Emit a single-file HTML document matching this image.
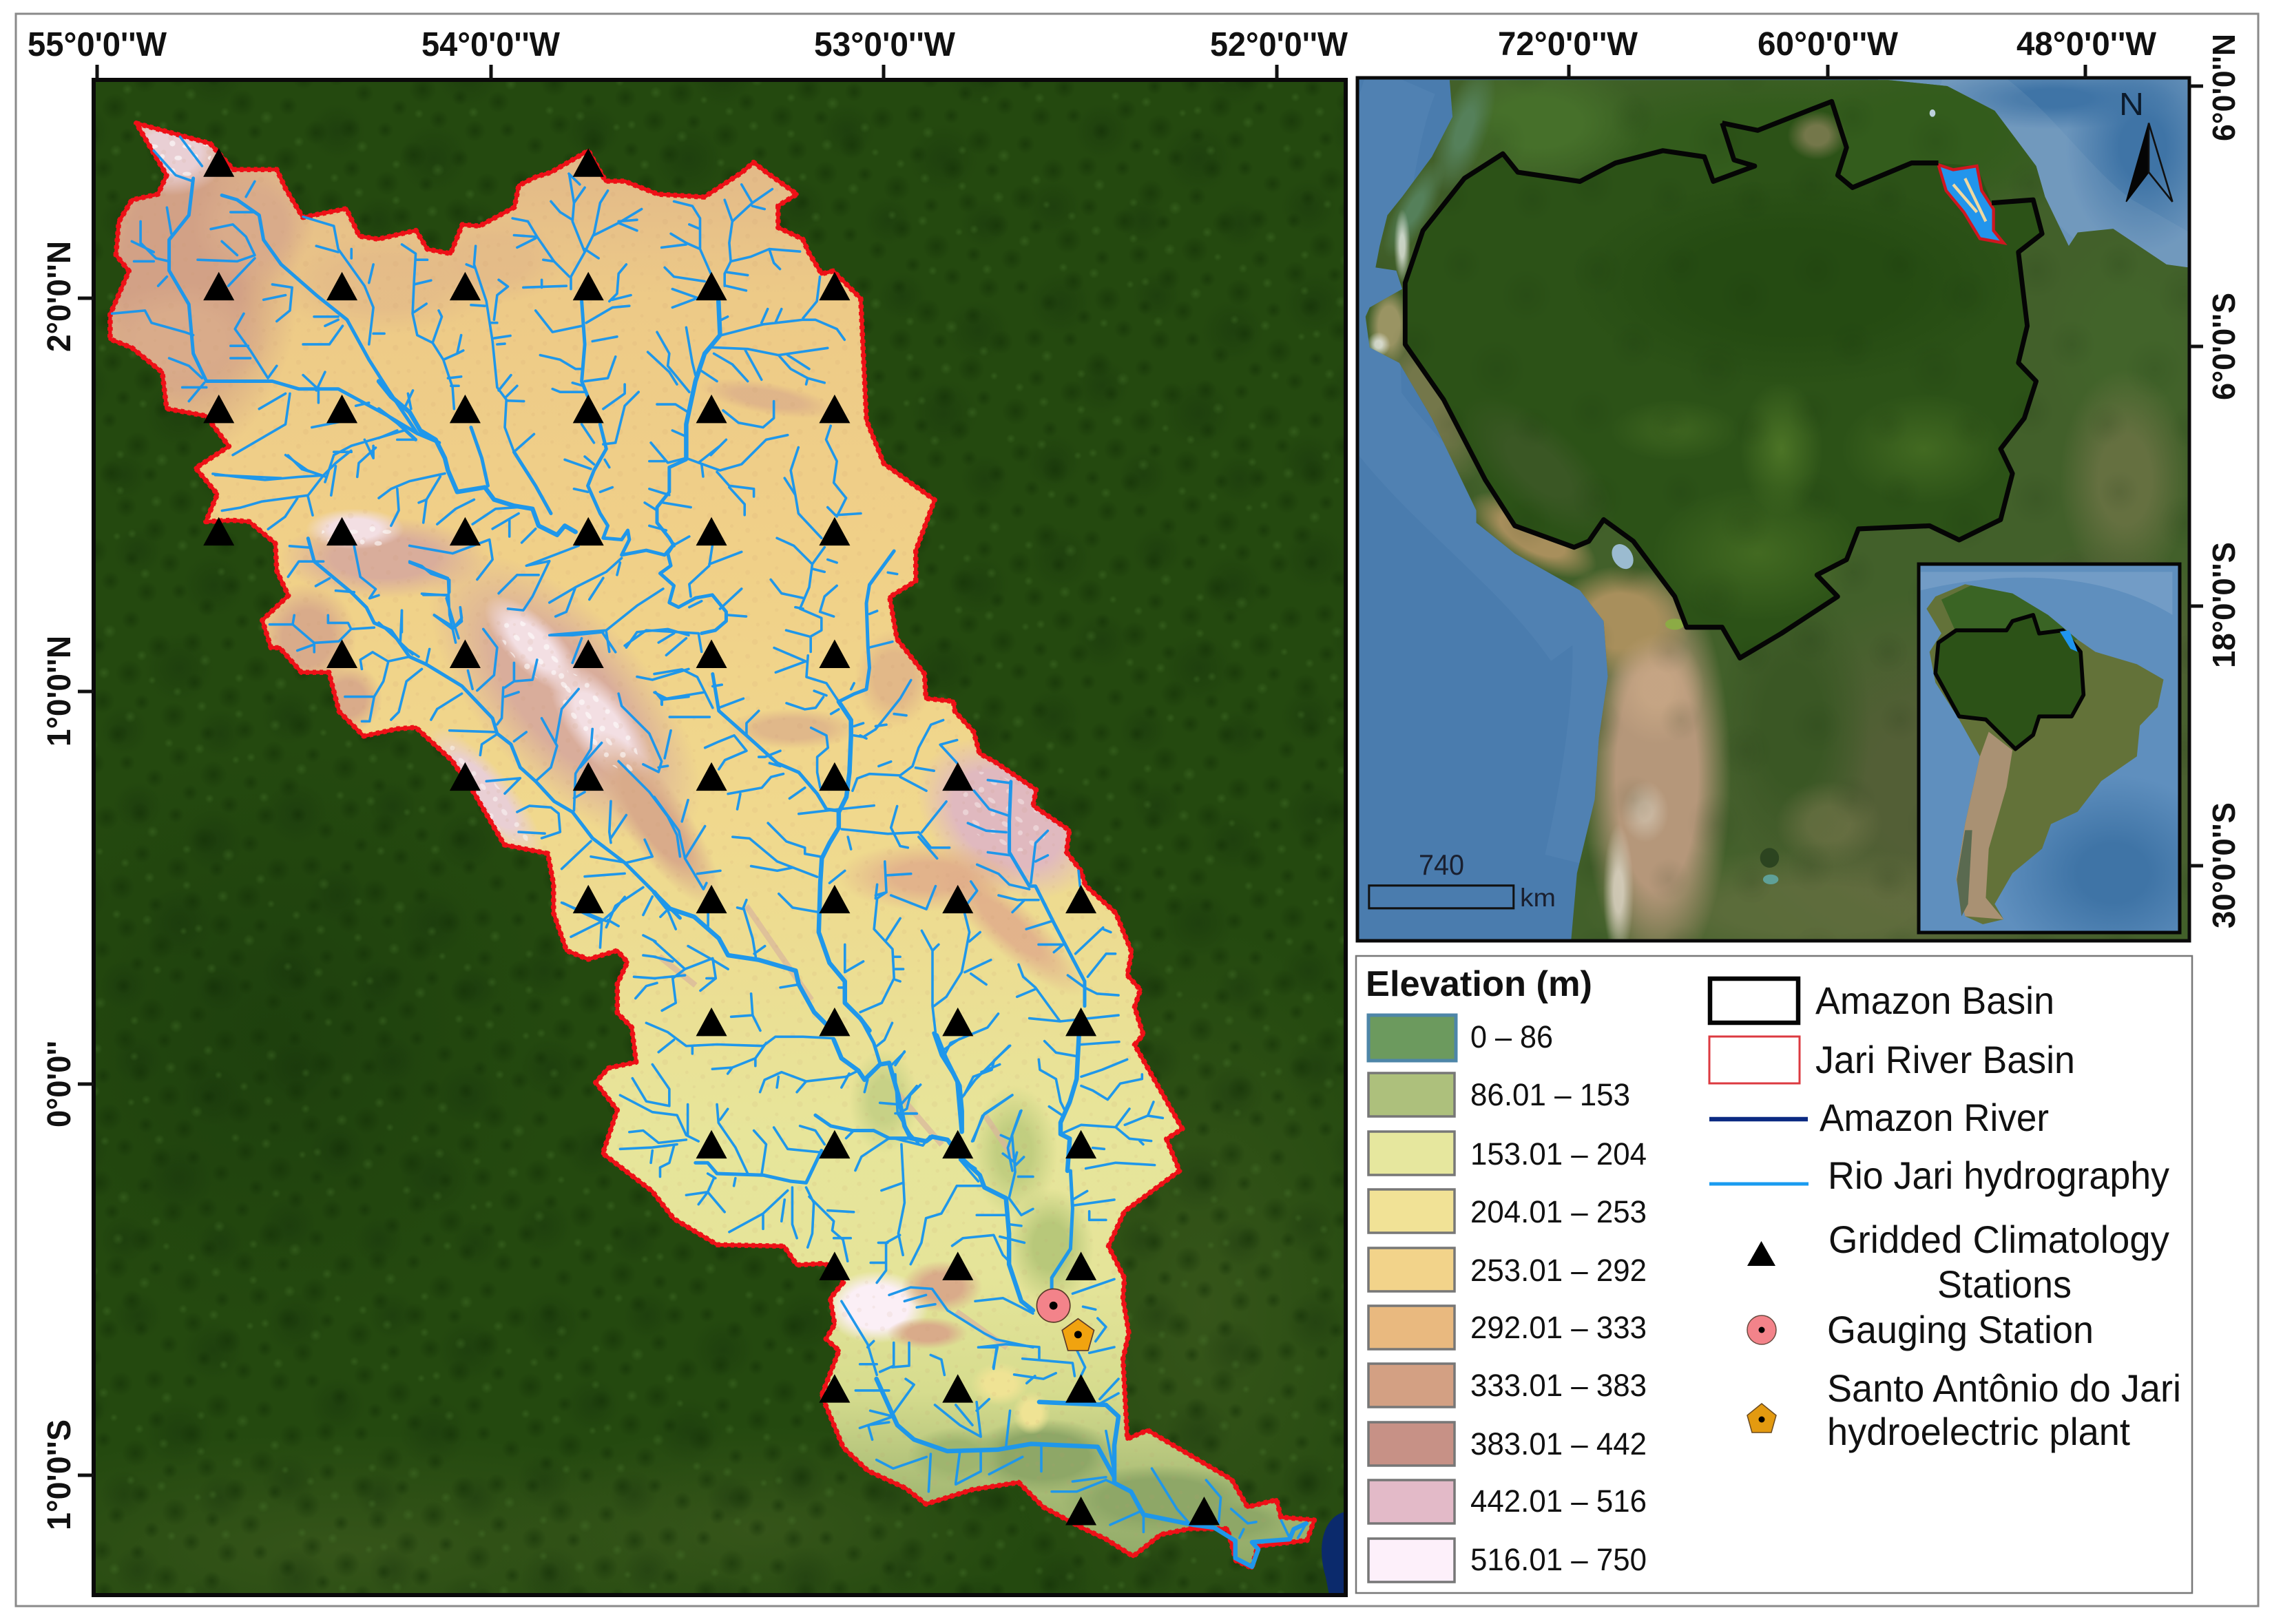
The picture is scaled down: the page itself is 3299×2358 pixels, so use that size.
<!DOCTYPE html>
<html><head><meta charset="utf-8"><title>Jari River Basin map</title>
<style>
html,body{margin:0;padding:0;background:#fff}
svg{display:block}
text{font-family:"Liberation Sans",Arial,sans-serif;fill:#111}
.b{font-weight:bold}
.r path{fill:none;stroke:#1f97ea;stroke-linejoin:round;stroke-linecap:round;vector-effect:non-scaling-stroke;stroke-width:3.6}
.r path.m{stroke-width:5}
.r path.k{stroke-width:6.5}
</style></head><body>
<svg xmlns="http://www.w3.org/2000/svg" width="3299" height="2358" viewBox="0 0 3299 2358">
<defs>
<clipPath id="mapc"><rect x="136" y="116" width="1818" height="2200"/></clipPath>
<clipPath id="panc"><rect x="1971" y="113" width="1208" height="1253"/></clipPath>
<clipPath id="insc"><rect x="2786" y="819" width="379" height="535"/></clipPath>
<clipPath id="land"><path d="M180 130 185 190 150 255 100 320 75 350 62 400 55 435 90 440 100 470 45 500 38 515 45 565 95 590 150 680 190 760 225 830 225 850 290 900 400 960 440 1010 447 1100 432 1200 425 1300 395 1420 385 1530 1428 1530 1428 435 1390 430 1300 372 1240 378 1225 400 1185 320 1170 270 1100 180 1020 140 920 130Z"/></clipPath>
<path id="basin" d="M94 85 145 99 161 117 191 117 197 130 209 150 239 144 248 163 261 165 287 159 295 172 311 175 319 155 331 156 355 143 358 128 370 122 380 119 406 104 418 125 431 125 454 134 486 136 512 119 520 112 529 119 550 134 537 142 537 157 554 165 558 174 567 189 575 187 594 206 598 290 610 320 645 345 632 380 632 401 614 412 619 441 638 465 639 482 658 484 659 491 672 505 676 520 687 526 715 545 713 556 738 573 736 588 746 601 749 611 770 630 781 657 778 673 787 683 783 695 789 714 783 721 816 779 805 786 814 808 776 836 765 860 776 882 775 896 779 920 775 938 778 993 792 987 850 1021 861 1040 881 1035 884 1047 907 1049 902 1063 868 1067 864 1082 853 1077 847 1055 821 1055 801 1059 782 1074 763 1062 746 1054 720 1040 703 1023 671 1028 639 1038 625 1027 599 1015 582 999 567 963 579 932 570 924 576 914 573 896 582 885 576 874 567 872 550 873 541 860 495 859 475 847 465 841 450 822 416 796 426 766 411 747 420 737 439 733 436 709 426 699 426 679 433 664 426 656 406 662 391 656 382 630 382 610 378 589 348 583 327 547 312 525 287 502 274 503 251 508 234 491 227 464 208 464 193 447 187 447 181 428 199 411 191 394 190 375 172 360 160 359 142 360 150 341 135 323 158 308 142 287 115 282 112 257 91 240 76 234 76 217 89 187 80 176 82 153 91 138 109 134 115 121Z"/>
<clipPath id="bc"><use href="#basin"/></clipPath>
<linearGradient id="elev" gradientUnits="userSpaceOnUse" x1="0" y1="85" x2="0" y2="1080">
<stop offset="0" stop-color="#dfb489"/><stop offset=".12" stop-color="#edca87"/><stop offset=".3" stop-color="#f0d088"/><stop offset=".48" stop-color="#f0d88d"/><stop offset=".58" stop-color="#ecdd92"/><stop offset=".7" stop-color="#e7e59a"/><stop offset=".8" stop-color="#e5e499"/><stop offset=".88" stop-color="#d6dc8e"/><stop offset=".95" stop-color="#a6ba74"/><stop offset="1" stop-color="#8fa968"/>
</linearGradient>
<radialGradient id="dk"><stop offset="0" stop-color="#122e06" stop-opacity=".5"/><stop offset="1" stop-color="#122e06" stop-opacity="0"/></radialGradient>
<radialGradient id="lt"><stop offset="0" stop-color="#4f8032" stop-opacity=".33"/><stop offset="1" stop-color="#4f8032" stop-opacity="0"/></radialGradient>
<radialGradient id="dk2"><stop offset="0" stop-color="#10280a" stop-opacity=".4"/><stop offset="1" stop-color="#10280a" stop-opacity="0"/></radialGradient>
<pattern id="mA" patternUnits="userSpaceOnUse" width="260" height="260" patternTransform="rotate(17)">
<g fill="url(#dk)"><circle cx="20" cy="30" r="16"/><circle cx="70" cy="17" r="12"/><circle cx="120" cy="40" r="20"/><circle cx="185" cy="25" r="14"/><circle cx="235" cy="50" r="18"/><circle cx="40" cy="85" r="14"/><circle cx="95" cy="90" r="18"/><circle cx="150" cy="75" r="12"/><circle cx="205" cy="100" r="20"/><circle cx="25" cy="140" r="20"/><circle cx="80" cy="150" r="12"/><circle cx="130" cy="130" r="16"/><circle cx="180" cy="150" r="18"/><circle cx="235" cy="135" r="12"/><circle cx="50" cy="195" r="16"/><circle cx="105" cy="205" r="20"/><circle cx="160" cy="200" r="12"/><circle cx="215" cy="190" r="16"/><circle cx="25" cy="235" r="14"/><circle cx="80" cy="240" r="12"/><circle cx="140" cy="240" r="14"/><circle cx="195" cy="240" r="16"/><circle cx="240" cy="225" r="12"/></g>
<g fill="url(#lt)"><circle cx="45" cy="50" r="9"/><circle cx="100" cy="60" r="7"/><circle cx="160" cy="50" r="10"/><circle cx="215" cy="70" r="8"/><circle cx="60" cy="115" r="8"/><circle cx="115" cy="110" r="7"/><circle cx="170" cy="110" r="9"/><circle cx="20" cy="105" r="7"/><circle cx="225" cy="160" r="9"/><circle cx="150" cy="165" r="7"/><circle cx="75" cy="175" r="8"/><circle cx="30" cy="180" r="7"/><circle cx="130" cy="175" r="6"/><circle cx="185" cy="215" r="8"/><circle cx="110" cy="240" r="7"/><circle cx="240" cy="100" r="6"/></g>
</pattern>
<pattern id="mB" patternUnits="userSpaceOnUse" width="370" height="370">
<g fill="url(#dk2)"><circle cx="60" cy="70" r="45"/><circle cx="200" cy="60" r="35"/><circle cx="310" cy="110" r="45"/><circle cx="120" cy="190" r="40"/><circle cx="260" cy="230" r="50"/><circle cx="50" cy="300" r="40"/><circle cx="180" cy="320" r="35"/><circle cx="320" cy="325" r="35"/></g>
</pattern>
<pattern id="sp" patternUnits="userSpaceOnUse" width="31" height="29">
<g fill="#c8966e" fill-opacity=".1"><circle cx="4" cy="5" r="1.6"/><circle cx="14" cy="3" r="1"/><circle cx="25" cy="8" r="2"/><circle cx="9" cy="15" r="1.2"/><circle cx="20" cy="18" r="1.7"/><circle cx="3" cy="24" r="1.4"/><circle cx="14" cy="25" r="1"/><circle cx="27" cy="25" r="1.3"/></g>
</pattern>
<pattern id="wp" patternUnits="userSpaceOnUse" width="23" height="19">
<g fill="#fff"><circle cx="4" cy="4" r="2"/><ellipse cx="14" cy="6" rx="3" ry="1.4"/><circle cx="20" cy="13" r="1.7"/><ellipse cx="8" cy="14" rx="2.6" ry="1.6"/></g>
</pattern>
<radialGradient id="g1"><stop offset=".5" stop-color="#d2a186"/><stop offset="1" stop-color="#d2a186" stop-opacity="0"/></radialGradient>
<radialGradient id="g2"><stop offset=".5" stop-color="#e9cfd4"/><stop offset="1" stop-color="#e9cfd4" stop-opacity="0"/></radialGradient>
<radialGradient id="g3"><stop offset=".5" stop-color="#d9ab8a"/><stop offset="1" stop-color="#d9ab8a" stop-opacity="0"/></radialGradient>
<radialGradient id="g4"><stop offset=".5" stop-color="#e2b888"/><stop offset="1" stop-color="#e2b888" stop-opacity="0"/></radialGradient>
<radialGradient id="g5"><stop offset=".5" stop-color="#d9ad9b"/><stop offset="1" stop-color="#d9ad9b" stop-opacity="0"/></radialGradient>
<radialGradient id="g6"><stop offset=".5" stop-color="#f3dfe3"/><stop offset="1" stop-color="#f3dfe3" stop-opacity="0"/></radialGradient>
<radialGradient id="g7"><stop offset=".6" stop-color="#e0b9bf"/><stop offset="1" stop-color="#e0b9bf" stop-opacity="0"/></radialGradient>
<radialGradient id="g8"><stop offset=".4" stop-color="#dfa98a"/><stop offset="1" stop-color="#dfa98a" stop-opacity="0"/></radialGradient>
<radialGradient id="g9"><stop offset=".6" stop-color="#fbeff6"/><stop offset="1" stop-color="#fbeff6" stop-opacity="0"/></radialGradient>
<radialGradient id="g10"><stop offset=".4" stop-color="#c7d186"/><stop offset="1" stop-color="#c7d186" stop-opacity="0"/></radialGradient>
<radialGradient id="g11"><stop offset=".4" stop-color="#b8c87a"/><stop offset="1" stop-color="#b8c87a" stop-opacity="0"/></radialGradient>
<radialGradient id="g12"><stop offset=".6" stop-color="#8ea767"/><stop offset="1" stop-color="#8ea767" stop-opacity="0"/></radialGradient>
<radialGradient id="g13"><stop offset=".5" stop-color="#9fb56f"/><stop offset="1" stop-color="#9fb56f" stop-opacity="0"/></radialGradient>
<radialGradient id="g14"><stop offset=".5" stop-color="#efe394"/><stop offset="1" stop-color="#efe394" stop-opacity="0"/></radialGradient>
<radialGradient id="ol"><stop offset="0" stop-color="#3d5a1e" stop-opacity=".7"/><stop offset="1" stop-color="#3d5a1e" stop-opacity="0"/></radialGradient>
<radialGradient id="dg"><stop offset="0" stop-color="#1a3a0c" stop-opacity=".6"/><stop offset="1" stop-color="#1a3a0c" stop-opacity="0"/></radialGradient>
<radialGradient id="p1"><stop offset=".4" stop-color="#335c1c"/><stop offset="1" stop-color="#335c1c" stop-opacity="0"/></radialGradient>
<radialGradient id="p2"><stop offset=".4" stop-color="#46702a"/><stop offset="1" stop-color="#46702a" stop-opacity="0"/></radialGradient>
<radialGradient id="p3"><stop offset=".4" stop-color="#42642a"/><stop offset="1" stop-color="#42642a" stop-opacity="0"/></radialGradient>
<radialGradient id="p4"><stop offset=".4" stop-color="#74774a"/><stop offset="1" stop-color="#74774a" stop-opacity="0"/></radialGradient>
<radialGradient id="p5"><stop offset=".4" stop-color="#535f36"/><stop offset="1" stop-color="#535f36" stop-opacity="0"/></radialGradient>
<radialGradient id="p6"><stop offset=".4" stop-color="#3a5724"/><stop offset="1" stop-color="#3a5724" stop-opacity="0"/></radialGradient>
<radialGradient id="p7"><stop offset=".55" stop-color="#b5977a"/><stop offset="1" stop-color="#b5977a" stop-opacity="0"/></radialGradient>
<radialGradient id="p8"><stop offset=".5" stop-color="#a88f5c"/><stop offset="1" stop-color="#a88f5c" stop-opacity="0"/></radialGradient>
<radialGradient id="p9"><stop offset=".5" stop-color="#9a9463"/><stop offset="1" stop-color="#9a9463" stop-opacity="0"/></radialGradient>
<radialGradient id="p10"><stop offset=".3" stop-color="#e8ece6"/><stop offset="1" stop-color="#e8ece6" stop-opacity="0"/></radialGradient>
<radialGradient id="p11"><stop offset=".5" stop-color="#254b12"/><stop offset="1" stop-color="#254b12" stop-opacity="0"/></radialGradient>
<radialGradient id="p12"><stop offset="0" stop-color="#4c7426"/><stop offset="1" stop-color="#4c7426" stop-opacity="0"/></radialGradient>
<radialGradient id="p13"><stop offset=".3" stop-color="#3f74a6"/><stop offset="1" stop-color="#3f74a6" stop-opacity="0"/></radialGradient>
<radialGradient id="p14"><stop offset=".3" stop-color="#55805a"/><stop offset="1" stop-color="#55805a" stop-opacity="0"/></radialGradient>
<radialGradient id="p15"><stop offset=".3" stop-color="#c9a886"/><stop offset="1" stop-color="#c9a886" stop-opacity="0"/></radialGradient>
<radialGradient id="p16"><stop offset=".3" stop-color="#dcd4c4"/><stop offset="1" stop-color="#dcd4c4" stop-opacity="0"/></radialGradient>
<path id="t" d="M0-19.7l10.7 19.7h-21.4z" fill="#000"/>
</defs>

<rect width="3299" height="2358" fill="#fff"/>
<rect x="23" y="20" width="3256" height="2312" fill="none" stroke="#8a8a8a" stroke-width="3"/>

<!-- MAIN MAP -->
<g clip-path="url(#mapc)">
<rect x="136" y="116" width="1818" height="2200" fill="#24490f"/>
<ellipse cx="1750" cy="1900" rx="320" ry="560" fill="url(#ol)"/>
<ellipse cx="500" cy="2250" rx="650" ry="170" fill="url(#ol)"/>
<ellipse cx="1100" cy="2220" rx="400" ry="150" fill="url(#ol)"/>
<ellipse cx="400" cy="1500" rx="420" ry="420" fill="url(#dg)"/>
<rect x="136" y="116" width="1818" height="2200" fill="url(#mB)" opacity=".7"/>
<rect x="136" y="116" width="1818" height="2200" fill="url(#mA)"/>
<path d="M1925 2290 C1910 2240 1925 2200 1954 2195 L1954 2316 L1930 2316Z" fill="#0b2a6c"/>
<g transform="scale(2.104)">
<use href="#basin" fill="url(#elev)"/>
<g clip-path="url(#bc)">
<ellipse cx="125" cy="190" rx="82" ry="130" fill="url(#g1)"/>
<ellipse cx="118" cy="105" rx="40" ry="30" fill="url(#g2)"/>
<ellipse cx="175" cy="155" rx="42" ry="42" fill="url(#g3)"/>
<ellipse cx="125" cy="235" rx="60" ry="40" fill="url(#g3)"/>
<ellipse cx="265" cy="195" rx="80" ry="36" fill="url(#g4)" opacity=".7"/>
<ellipse cx="340" cy="180" rx="50" ry="30" fill="url(#g4)" opacity=".7"/>
<ellipse cx="530" cy="275" rx="48" ry="11" fill="url(#g3)" transform="rotate(10 530 275)" opacity=".7"/>
<ellipse cx="265" cy="385" rx="72" ry="28" fill="url(#g5)"/>
<ellipse cx="245" cy="365" rx="34" ry="14" fill="url(#g6)"/>
<ellipse cx="212" cy="440" rx="34" ry="38" fill="url(#g3)"/>
<ellipse cx="240" cy="482" rx="24" ry="24" fill="url(#g3)"/>
<ellipse cx="390" cy="482" rx="125" ry="58" fill="url(#g5)" transform="rotate(48 390 482)"/>
<ellipse cx="368" cy="445" rx="44" ry="18" fill="url(#g6)" transform="rotate(45 368 445)"/>
<ellipse cx="415" cy="500" rx="52" ry="22" fill="url(#g6)" transform="rotate(52 415 500)"/>
<ellipse cx="335" cy="548" rx="58" ry="18" fill="url(#g2)" transform="rotate(50 335 548)"/>
<ellipse cx="452" cy="565" rx="72" ry="22" fill="url(#g3)" transform="rotate(55 452 565)"/>
<ellipse cx="617" cy="468" rx="27" ry="34" fill="url(#g4)"/>
<ellipse cx="547" cy="503" rx="46" ry="14" fill="url(#g3)" opacity=".7"/>
<ellipse cx="695" cy="565" rx="68" ry="48" fill="url(#g7)" transform="rotate(35 695 565)"/>
<ellipse cx="642" cy="605" rx="64" ry="24" fill="url(#g8)" opacity=".8"/>
<ellipse cx="697" cy="640" rx="68" ry="18" fill="url(#g8)" transform="rotate(42 697 640)" opacity=".8"/>
<ellipse cx="605" cy="902" rx="36" ry="25" fill="url(#g9)"/>
<ellipse cx="650" cy="888" rx="28" ry="18" fill="url(#g3)"/>
<ellipse cx="640" cy="920" rx="28" ry="11" fill="url(#g3)"/>
<ellipse cx="610" cy="760" rx="24" ry="36" fill="url(#g10)"/>
<ellipse cx="700" cy="795" rx="30" ry="46" fill="url(#g11)" opacity=".8"/>
<ellipse cx="725" cy="860" rx="30" ry="40" fill="url(#g11)"/>
<ellipse cx="720" cy="1005" rx="52" ry="26" fill="url(#g12)"/>
<ellipse cx="660" cy="1005" rx="34" ry="20" fill="url(#g13)"/>
<ellipse cx="800" cy="1035" rx="68" ry="24" fill="url(#g12)"/>
<ellipse cx="850" cy="1050" rx="38" ry="14" fill="url(#g12)"/>
<ellipse cx="712" cy="975" rx="13" ry="15" fill="url(#g14)"/>
<ellipse cx="690" cy="955" rx="20" ry="15" fill="url(#g14)"/>
<path d="M515 625 L560 690M620 755 L650 790M680 770 L700 800M455 660 L480 680M660 905 L695 930" stroke="#d9b59d" stroke-width="4" fill="none" opacity=".7"/>
<use href="#basin" fill="url(#sp)"/>
<ellipse cx="368" cy="450" rx="34" ry="12" fill="url(#wp)" opacity=".55" transform="rotate(45 368 450)"/>
<ellipse cx="412" cy="498" rx="42" ry="15" fill="url(#wp)" opacity=".55" transform="rotate(52 412 498)"/>
<ellipse cx="335" cy="548" rx="44" ry="10" fill="url(#wp)" opacity=".45" transform="rotate(50 335 548)"/>
<ellipse cx="248" cy="368" rx="26" ry="10" fill="url(#wp)" opacity=".55"/>
<ellipse cx="690" cy="560" rx="36" ry="22" fill="url(#wp)" opacity=".35" transform="rotate(35 690 560)"/>
<ellipse cx="120" cy="105" rx="26" ry="18" fill="url(#wp)" opacity=".6"/>
</g>
<use href="#basin" fill="none" stroke="#ee1017" stroke-width="3.6" stroke-dasharray="2.4 2.4" stroke-linejoin="round"/>
<use href="#basin" fill="none" stroke="#ee1017" stroke-width="2.5" stroke-linejoin="round"/>
</g>

<g class="r">
<!-- Z1 NW -->
<g transform="scale(.6378 .4464)">
<path class="m" d="M440 580 L430 700 385 780 385 880 430 990 440 1150 470 1240 620 1240 680 1265 770 1265 880 1350 950 1410 1000 1440"/>
<path d="M350 490 L400 570 440 590M410 445 L460 540M380 675 L390 760M320 720 L320 790 355 840 385 850M300 785 L350 820M305 850 L350 850M380 900 L360 930M255 1020 L330 1010 345 1050 420 1080 440 1090M385 1165 L430 1190 460 1230M415 1260 L470 1260M430 1305 L465 1245M555 1020 L535 1070 570 1140 610 1230 630 1190M525 1125 L565 1125M525 1165 L570 1165"/>
<path class="m" d="M505 635 L540 650 590 700 600 780 640 860 720 960 790 1040 840 1170 880 1260 950 1410"/>
<path d="M525 690 L580 690M580 590 L560 640M480 745 L530 730 560 770 580 830 540 850 450 845M505 785 L540 830M580 840 L520 930M690 705 L760 735 770 810 830 930 850 1000 840 1120M720 800 L770 820M800 810 L800 840M850 860 L840 920M850 1085 L875 1085M620 925 L665 935 660 1010 630 1045M600 975 L650 960M715 1030 L770 1030M740 1060 L770 1040M690 1120 L750 1120 780 1060M1295 565 L1320 600M590 1330 L650 1280M660 1280 L650 1380 530 1480M710 1390 L780 1370M720 1270 L740 1210M690 1220 L720 1260M725 1260 L725 1310M810 1320 L840 1310M920 1330 L940 1270M920 1400 L800 1450 760 1480 740 1568M830 1430 L850 1490M760 1470 L800 1470M650 1480 L700 1530 740 1550M850 1450 L850 1490M490 1545 L640 1555"/>
</g>
<!-- Z5 -->
<g transform="translate(550 250) scale(.4464)">
<path d="M75 235 L120 265 115 350 110 460 125 530 175 555 210 610 240 700 245 770M120 285 L158 285M115 365 L170 352M115 455 L155 428M175 555 L205 470 195 450M210 610 L255 590 275 580 255 590 268 530M225 670 L268 665M235 695 L260 695M315 240 L310 300 350 420 370 550 385 700 415 740 410 830 440 910M285 300 L310 310M300 432 L345 435M390 350 L420 372 385 400 375 480M365 490 L385 490M375 540 L428 532M385 560 L410 558M390 710 L430 660M415 730 L450 695M415 743 L472 745M445 905 L505 852"/>
<path class="m" d="M440 910 L510 1020 560 1110"/>
<path class="k" d="M0 680 L40 730 100 780 135 840 185 870 215 930 225 970 255 1040 345 1025 375 1065 440 1085 500 1095 520 1150 580 1180 605 1150 640 1170"/>
<path class="m" d="M0 770 L60 815 120 870M300 830 L335 930 355 1020"/>
<path d="M0 865 L60 840M60 870 L120 870M95 720 L105 770M215 980 L100 1005 40 1030 0 1060M60 1030 L65 1100 40 1150M200 990 L155 1065 130 1075M155 1065 L145 1140M190 1145 L250 1095 310 1065M305 1145 L380 1095 450 1090M370 1160 L455 1110M425 1130 L425 1185M465 1205 L510 1160M620 10 L635 100 630 160 670 260M635 100 L670 50M560 95 L590 130 630 155M745 60 L720 100 700 200 670 260 625 340 625 380M700 205 L780 165 855 120M780 165 L840 190M780 160 L840 155M670 250 L715 280M435 150 L485 160 515 210 570 290 620 340M440 205 L510 210M450 245 L510 215M535 285 L570 290M470 375 L610 370M530 350 L530 375M805 300 L780 330 775 395 750 420"/>
<path class="m" d="M660 420 L670 560 660 680 680 730"/>
<path d="M675 490 L760 440 815 435M760 415 L820 400M510 450 L565 520 660 500M695 550 L775 535M525 595 L590 610 640 640 660 640M670 680 L745 670 770 600M630 685 L665 695M565 705 L590 715 670 715M730 770 L800 720 800 690M845 715 L800 760 770 880"/>
<path class="m" d="M720 820 L740 900 700 970 680 1020 720 1110 745 1150 730 1190"/>
<path d="M660 820 L700 880M770 880 L730 885M605 935 L690 965M670 925 L700 950M735 935 L750 960M635 1030 L680 1040M720 1040 L760 1025"/>
<path class="m" d="M730 1190 L790 1195 810 1165 815 1195 790 1245 870 1230 930 1245 960 1210 940 1240 950 1280 915 1305 960 1345 945 1400 975 1415 1030 1385 1085 1375 1130 1430 1130 1460 1095 1490 1050 1500"/>
<path d="M960 95 L1020 110 1045 150 1045 250 1080 330M1010 170 L1045 185M950 200 L1000 230 1045 250M920 245 L1000 235M930 310 L960 340 1060 355M955 380 L1040 410M955 440 L1035 410M1180 40 L1215 100 1150 160 1125 90M1280 55 L1215 100M1215 110 L1255 120M1150 160 L1140 230 1145 290 1125 330 1125 370M1145 290 L1210 275 1270 250 1370 258M1270 250 L1285 295 1305 315M1130 325 L1200 335M1130 370 L1195 385"/>
<path class="k" d="M1105 420 L1110 530 1060 590 1030 680 1015 750 1000 820 1000 930"/>
<path d="M1115 530 L1250 495 1380 480 1420 480 1490 510 1515 545M1380 475 L1425 420 1435 340M1245 490 L1265 445M1290 490 L1310 445M1085 570 L1200 575 1300 595 1460 572M1300 595 L1340 640 1395 670 1450 685M1395 670 L1390 690M1330 595 L1400 640M1190 575 L1245 675M1090 590 L1150 625 1200 680M1115 480 L1135 470M905 520 L945 590 940 630 1010 715M875 585 L945 650 970 690M1000 505 L1020 620 1030 660M1040 640 L1100 680M905 755 L965 755 1005 780M955 840 L1000 860M1120 775 L1170 815 1250 830 1285 800 1285 745M885 880 L940 945 1000 930M880 940 L930 940M1000 930 L1040 945 1110 970 1180 950 1260 870 1330 855M1040 945 L1110 890 1130 870M1080 920 L1110 890M1050 950 L1055 990M1100 975 L1140 1020 1220 1030 1220 1055M1140 1025 L1190 1080 1190 1115"/>
<path class="m" d="M1000 935 L945 960 945 1040 905 1090 905 1140 945 1190 960 1215"/>
<path d="M880 1030 L945 1050M865 1075 L905 1100M925 1075 L1015 1090M880 1150 L935 1165M965 1210 L1010 1185M1085 1215 L1075 1280 1010 1340 1015 1380M1075 1275 L1180 1235M1180 1355 L1110 1420M1130 1440 L1195 1445M1010 1415 L1050 1395M925 1355 L840 1410 740 1490 560 1505M740 1495 L750 1560M800 1540 L870 1490 1040 1500 1050 1560M910 1530 L960 1500M1365 895 L1340 970 1355 1050 1365 1110 1440 1190M1320 995 L1355 1050M1470 825 L1455 870 1490 940 1480 1010 1520 1060 1490 1120 1460 1090M1490 1115 L1568 1110M1295 1190 L1350 1215 1410 1275 1400 1350 1370 1420 1440 1450 1440 1490 1405 1510 1405 1560M1450 1220 L1410 1275M1410 1290 L1450 1300M1460 1260 L1490 1270M1275 1325 L1310 1370 1380 1385M1490 1345 L1450 1380 1435 1430 1480 1445M1355 1415 L1380 1420M1325 1490 L1400 1510M650 1215 L480 1280 555 1265 500 1380 470 1425 420 1420M390 1370 L450 1310 520 1310M790 1255 L740 1300 640 1350 555 1400M730 1320 L685 1390M640 1350 L610 1430 575 1445M775 1310 L785 1270M100 1215 L240 1240M240 1240 L360 1195 370 1260 320 1325M100 1270 L225 1320 230 1440 250 1530M145 1375 L225 1375M180 1440 L245 1480 270 1450 265 1415M0 1465 L70 1530 110 1568M75 1425 L70 1530"/>
</g>
<!-- Z6 -->
<g transform="translate(300 650) scale(.4464)">
<path d="M20 85 L100 95 190 105 300 95 380 90 420 50 470 10M265 25 L310 70 375 90M420 60 L405 155M380 90 L330 155 180 175 110 195 50 205M295 165 L255 225 200 265M330 160 L345 220M550 0 L495 50 490 95"/>
<path class="m" d="M330 295 L350 370 470 470 520 520 545 570 600 595 660 680 715 705 830 775 930 880 945 930 990 965 1020 1040 1070 1085 1130 1150 1190 1185 1255 1270 1360 1350 1450 1440 1540 1530"/>
<path d="M270 320 L335 325M265 420 L300 370 380 370M355 450 L400 425M420 465 L480 470M480 320 L500 420 550 460 530 490 560 480M660 370 L700 385 730 410 790 430 790 470 780 490 810 590 820 620M700 475 L780 480M740 545 L800 590 830 565 825 520M205 575 L280 575 350 635 430 630 470 590 545 585M285 545 L280 575M295 660 L350 640 350 665M395 545 L395 570 460 570 470 590M635 530 L635 600M500 690 L540 665 590 695 660 680M505 720 L500 690M590 700 L575 760 545 810 530 890M450 810 L545 810M505 890 L530 890M700 720 L650 760 625 860 600 885M725 655 L715 700M660 660 L690 680M850 725 L865 785M900 590 L945 650 935 740 880 790M1000 700 L1000 760 1060 755 1075 690M970 780 L1000 760M965 780 L960 880 945 900M970 810 L1015 795M830 800 L750 850 730 885M790 920 L940 925M890 1000 L895 965 940 935M1000 955 L1040 925M910 1085 L1020 1075 970 1125M1010 1185 L1050 1165 1120 1170 1145 1190 1150 1250 1090 1270M1015 1250 L1100 1255M1090 880 L1140 970 1120 1040 1070 1085M1210 785 L1155 850 1135 960M1255 915 L1250 980 1200 1060 1195 1180M1285 960 L1215 1040M1195 1140 L1230 1120M1315 1150 L1310 1250 1315 1285M1365 1195 L1315 1270M1250 1280 L1155 1370M1425 1275 L1450 1330 1365 1350 1250 1330M1230 1395 L1360 1385M1340 800 L1350 840 1440 930 1480 1020 1470 1055 1420 1030M1500 1035 L1470 1040M1340 1020 L1440 1120 1500 1200 1530 1260 1540 1330M1510 920 L1490 1010M1400 745 L1450 755 1568 720M1460 795 L1480 820 1568 810M1480 820 L1480 835M1365 650 L1400 600 1500 590 1568 610M1495 675 L1560 620M1115 610 L1190 610 1290 600M1220 620 L1190 700M1290 605 L1330 665M1420 1520 L1450 1460M1155 1480 L1190 1495 1300 1540M1300 1560 L1330 1490 1420 1430"/>
</g>
<!-- Z7 -->
<g transform="translate(950 800) scale(.4464)">
<path class="m" d="M780 0 L700 110 690 170 695 310 700 380 690 450 650 465 600 490"/>
<path class="k" d="M600 490 L640 550 640 600 635 720 625 800 600 850 600 900 570 950 545 1000 540 1080 535 1240 570 1340 620 1400 620 1470 670 1520 700 1560"/>
<path d="M700 205 L725 195M695 315 L775 295M760 70 L790 75M640 450 L650 430M500 340 L495 410 560 430 600 490M395 395 L490 360M390 315 L495 360M520 455 L560 470M430 495 L490 515 525 510 550 475M575 530 L600 515M835 420 L800 480 720 580 680 605 650 600M780 530 L820 535M650 570 L680 560M720 570 L755 565M690 610 L670 600M940 550 L900 565 860 640 840 700 800 730 700 725 660 740 645 780M985 615 L930 630 985 690M770 685 L730 700M800 735 L885 780M850 705 L910 715"/>
<path class="m" d="M190 400 L210 520 300 600 400 690 470 720 530 790 560 840 600 845"/>
<path d="M190 440 L220 435M210 510 L290 480M0 400 L90 385 140 410 190 510M0 460 L40 480 160 460M25 480 L25 500M50 540 L180 540M300 600 L300 560 340 520M165 640 L210 620 260 600 300 650 230 680 210 710M340 670 L360 670 410 650M375 690 L410 700M240 790 L350 770 380 735 420 725M280 790 L270 840M440 805 L490 770M510 575 L560 600 565 640 530 670 530 720 540 770M470 855 L600 840 715 828M610 905 L760 920 860 915 900 965 960 965M630 930 L640 970M790 830 L770 900 800 960 825 965M950 815 L870 915M860 930 L920 1000M255 930 L310 935 400 1010 530 1060M370 885 L430 945 490 965 490 985 545 995M315 1025 L400 1040 450 1030M620 1040 L570 1080M405 1115 L450 1160 535 1175M0 800 L80 910 100 1000 160 1100 170 1080M90 880 L110 810M100 1000 L165 895M140 1050 L215 1040"/>
<path class="m" d="M1160 750 L1155 880 1155 980 1220 1090 1240 1090 1300 1210 1400 1400 1400 1480"/>
<path d="M1085 745 L1160 755M1040 780 L1090 840 1150 860M1020 885 L1080 910 1145 915M1085 980 L1160 990M1050 1020 L1120 1050 1155 1085 1220 1100M1280 910 L1240 950 1225 1080M1280 990 L1240 1010M1120 1120 L1180 1135 1250 1135M1165 1175 L1205 1135M1210 1230 L1290 1205M1250 1280 L1330 1280M1300 1305 L1330 1280M1370 1310 L1460 1225M1460 1230 L1485 1240M1410 1385 L1470 1310 1500 1310M1345 1380 L1400 1420M1400 1420 L1440 1440 1510 1445M1380 1040 L1385 1090M1185 1345 L1200 1385 1240 1420 1320 1530 1510 1510M1180 1450 L1240 1425M1220 1520 L1320 1530M1010 1180 L1025 1240 1010 1320 1000 1370 950 1450 910 1480M1030 1075 L1050 1105 1020 1145M1060 1240 L1025 1270M1010 1370 L1095 1330M1030 1375 L1080 1410M870 1235 L905 1300 905 1480 915 1568M905 1300 L925 1280M750 1010 L755 1110 725 1130 715 1230 775 1295 780 1390 740 1470 670 1500M755 1055 L835 1050M755 1110 L720 1120M725 1085 L720 1130M770 1120 L885 1165 915 1090M755 1265 L800 1195M785 1360 L810 1360M785 1395 L800 1400M780 1320 L800 1320M620 1280 L620 1370 680 1335M600 1420 L620 1420M175 1170 L175 1220"/>
<path class="k" d="M0 1110 L40 1160 130 1190 210 1260 240 1315 340 1330 460 1365 470 1410 520 1500 560 1540"/>
<path d="M40 1160 L70 1230M20 1190 L40 1170M300 1135 L290 1160 320 1260 330 1320M270 1160 L290 1165M360 1285 L325 1310M0 1270 L100 1360 60 1390 70 1470 25 1495M0 1390 L100 1380M0 1320 L60 1335M100 1360 L190 1325 200 1390 150 1430M110 1285 L190 1330 240 1360M170 1390 L200 1390M410 1420 L470 1410M315 1440 L320 1510 345 1560M250 1515 L320 1510"/>
</g>
<!-- Z8 -->
<g transform="translate(800 1300) scale(.4464)">
<path d="M65 135 L165 85 205 50 240 5M165 90 L160 170M185 80 L220 100M40 25 L110 60 165 85M300 130 L340 150M300 195 L340 200M270 265 L340 270M275 335 L310 295 345 285M310 415 L380 445 440 490 540 485 690 490 730 460 820 460 920 465"/>
<path class="k" d="M920 470 L945 530 1000 570 1020 600 1070 550 1100 545 1130 650 1150 750 1170 790 1220 800 1240 785 1290 795 1330 850 1395 910 1410 950 1480 985 1490 1100 1490 1200 1530 1320 1568 1350"/>
<path d="M350 510 L400 470M460 515 L460 495M700 480 L665 530 590 560 525 565M590 560 L575 580M665 530 L665 555M680 640 L695 600 750 575 830 605 960 590 1000 570M740 590 L735 625M830 605 L800 640M970 580 L945 625M1030 600 L1020 640"/>
<path class="m" d="M1007 400 L1050 480 1070 545"/>
<path d="M1110 415 L1085 470 1060 490M1150 510 L1110 550M1190 620 L1165 650 1130 690M1070 675 L1130 680M1130 710 L1190 710"/>
<path class="m" d="M860 715 L910 750 980 765 1050 765 1100 790 1170 790"/>
<path d="M810 750 L860 765 890 810M990 895 L1010 850 1100 790M960 790 L985 765M1140 810 L1150 1000 1130 1100 1145 1170M1075 960 L1145 935M1135 1105 L1090 1130 1090 1220 1060 1260M1065 1130 L1095 1130M1040 1195 L1085 1195"/>
<path class="m" d="M880 830 L830 935 780 930 690 910 540 905 510 870 470 870"/>
<path d="M540 680 L545 740 600 820 640 905M575 695 L550 730M660 765 L700 810 685 910M725 755 L770 825 870 835M530 920 L510 965 440 975M480 1005 L510 965 565 1030M510 905 L535 920M595 945 L600 920M225 650 L330 705 410 715 440 780 480 800M265 595 L310 670 385 685 385 630 330 550M445 680 L445 780M255 770 L300 765 350 805 440 795M225 825 L330 820 410 810M330 830 L325 870M400 815 L385 870 355 885 355 915M580 1095 L690 1035 770 960M690 1040 L690 1085M760 990 L750 1060M785 950 L785 1070 800 1115M830 950 L855 1000 850 1100 835 1145M840 980 L920 1060 915 1090 950 1120 965 1190M900 1025 L985 1030M920 1115 L975 1115"/>
<path class="m" d="M1245 448 L1270 520 1320 600 1335 770"/>
<path d="M1455 385 L1420 430 1300 480 1280 520M1490 490 L1440 540 1380 600 1335 660M1460 550 L1400 575M1500 650 L1410 710 1370 800M1530 700 L1500 780 1510 900 1490 985M1470 840 L1510 870M1520 915 L1568 915M1330 860 L1390 930M1400 945 L1320 945 1290 1000 1270 1035 1220 1050 1205 1130 1170 1200M1490 985 L1530 1040 1568 1020M1385 1040 L1480 1040M1490 1070 L1530 1075M1305 1140 L1340 1115 1440 1105 1470 1170 1490 1190M1460 1110 L1540 1130M945 1320 L1030 1460 1060 1560M1030 1470 L1050 1450M1115 1455 L1115 1530 1070 1550M1165 1455 L1165 1530 1110 1535M1005 1525 L1060 1525M1100 1300 L1170 1275 1240 1280 1290 1350 1410 1425 1450 1445 1568 1470M1150 1320 L1220 1300M1190 1340 L1250 1330M1235 1495 L1270 1510 1280 1560M1390 1470 L1450 1470 1440 1540M1380 1320 L1470 1310 1530 1340 1568 1360"/>
</g>
<!-- Z9 -->
<g transform="translate(1300 1200) scale(.3333)">
<path class="k" d="M800 910 L790 1100 760 1200 720 1290 720 1340 760 1360 750 1500"/>
<path d="M810 950 L975 938M650 935 L700 985 785 1000M810 1090 L900 1060 1010 1015M810 1130 L860 1150 925 1190 980 1120 1075 1100 1075 1080M625 1015 L630 1060 700 1100 720 1200 740 1240M670 1220 L730 1260M720 1340 L810 1300 960 1310 1020 1360 1115 1370M960 1310 L1020 1230M1000 1300 L1100 1260 1165 1270M1100 1260 L1125 1200M1065 1370 L1080 1385M860 1400 L910 1405M830 1490 L960 1465 1130 1475"/>
<path class="k" d="M180 910 L220 1010 280 1130 290 1240 290 1330"/>
<path d="M215 970 L280 925M500 955 L430 1020 420 1060 340 1090 300 1170M510 1170 L380 1260 340 1370M110 1125 L65 1170 50 1230 15 1250M0 1250 L90 1250M40 980 L0 1040M0 1360 L120 1390 150 1350 230 1365M0 1080 L10 1250 65 1340 100 1380M545 1240 L510 1340 490 1400 510 1500M460 1345 L505 1365M560 1440 L520 1480M530 1420 L520 1460M350 1490 L290 1450"/>
</g>
<!-- Z4 -->
<g transform="translate(1000 1700) scale(.6059 .4196)">
<path class="k" d="M840 800 L1000 810 1030 850 1020 950 1020 1080 1060 1110 1090 1190 1210 1225 1260 1235 1310 1280 1310 1340 1350 1370 1365 1310 1350 1285 1440 1275 1450 1240 1480 1220"/>
<path class="k" d="M450 720 L500 880 540 930 620 970 740 965 820 945 980 955 1020 1060"/>
<path d="M450 1000 L490 1030 570 990M580 980 L575 1110M650 970 L640 1080M700 970 L700 1040 640 1085M845 950 L845 1040M720 1050 L800 990M400 760 L480 760M520 720 L540 740 490 840M435 830 L490 850 410 890M480 870 L430 880 440 930M590 810 L650 880 700 920M640 810 L680 880M690 800 L700 920M720 790 L690 830M770 830 L760 960M780 705 L850 720 880 700M830 710 L810 735M800 650 L920 665 925 710M700 610 L760 600 840 610 840 650M740 610 L730 680M930 620 L950 680 940 710M960 630 L1020 610"/>
<path class="m" d="M915 0 L920 130 915 270 870 370 870 410"/>
<path d="M920 120 L1020 100M960 140 L960 170 1000 170M920 100 L955 70M920 425 L1020 375M945 470 L975 480M980 510 L1000 540 975 590M870 1110 L930 1110 1000 1070 1060 1110M1010 1225 L1080 1180 1090 1180M1090 1190 L1090 1250M920 1075 L1000 1060M1110 1030 L1170 1170 1200 1220M1000 900 L1020 1050M1240 1070 L1275 1130 1270 1220M1300 1170 L1340 1220M1330 1240 L1320 1270M1360 1215 L1340 1220M1420 1210 L1440 1270M1480 1220 L1460 1270M980 810 L1030 770M1030 720 L985 790"/>
</g>
</g>

<!-- triangles -->
<g transform="scale(2.104)">
<use href="#t" x="151" y="122"/><use href="#t" x="406" y="122"/>
<use href="#t" x="151" y="207.3"/><use href="#t" x="236" y="207.3"/><use href="#t" x="321" y="207.3"/><use href="#t" x="406" y="207.3"/><use href="#t" x="491" y="207.3"/><use href="#t" x="576" y="207.3"/>
<use href="#t" x="151" y="292"/><use href="#t" x="236" y="292"/><use href="#t" x="321" y="292"/><use href="#t" x="406" y="292"/><use href="#t" x="491" y="292"/><use href="#t" x="576" y="292"/>
<use href="#t" x="151" y="376.5"/><use href="#t" x="236" y="376.5"/><use href="#t" x="321" y="376.5"/><use href="#t" x="406" y="376.5"/><use href="#t" x="491" y="376.5"/><use href="#t" x="576" y="376.5"/>
<use href="#t" x="236" y="461"/><use href="#t" x="321" y="461"/><use href="#t" x="406" y="461"/><use href="#t" x="491" y="461"/><use href="#t" x="576" y="461"/>
<use href="#t" x="321" y="545.7"/><use href="#t" x="406" y="545.7"/><use href="#t" x="491" y="545.7"/><use href="#t" x="576" y="545.7"/><use href="#t" x="661" y="545.7"/>
<use href="#t" x="406" y="630.3"/><use href="#t" x="491" y="630.3"/><use href="#t" x="576" y="630.3"/><use href="#t" x="661" y="630.3"/><use href="#t" x="746" y="630.3"/>
<use href="#t" x="491" y="715"/><use href="#t" x="576" y="715"/><use href="#t" x="661" y="715"/><use href="#t" x="746" y="715"/>
<use href="#t" x="491" y="799.5"/><use href="#t" x="576" y="799.5"/><use href="#t" x="661" y="799.5"/><use href="#t" x="746" y="799.5"/>
<use href="#t" x="576" y="883.5"/><use href="#t" x="661" y="883.5"/><use href="#t" x="746" y="883.5"/>
<use href="#t" x="576" y="968"/><use href="#t" x="661" y="968"/><use href="#t" x="746" y="968"/>
<use href="#t" x="746" y="1052.5"/><use href="#t" x="831" y="1052.5"/>
<circle cx="727" cy="901" r="11.5" fill="#f3838a" stroke="#5b3a2a" stroke-width=".8"/>
<circle cx="727" cy="901" r="2.8" fill="#000"/>
<path d="M744 910 L755 918 751 932 737 932 733 918Z" fill="#f1a30f" stroke="#5b3a2a" stroke-width=".8"/>
<circle cx="744" cy="921" r="2.6" fill="#000"/>
</g>
</g>
<rect x="136" y="116" width="1818" height="2200" fill="none" stroke="#0a0a0a" stroke-width="6"/>
<path d="M141 94V116M713 94V116M1283 94V116M1854 94V116M113 433H136M113 1004H136M113 1574H136M113 2142H136" stroke="#111" stroke-width="5" fill="none"/>

<text class="b" x="40" y="81" font-size="49" textLength="202" lengthAdjust="spacingAndGlyphs">55°0'0''W</text>
<text class="b" x="612" y="81" font-size="49" textLength="201" lengthAdjust="spacingAndGlyphs">54°0'0''W</text>
<text class="b" x="1182" y="81" font-size="49" textLength="205" lengthAdjust="spacingAndGlyphs">53°0'0''W</text>
<text class="b" x="1757" y="81" font-size="49" textLength="200" lengthAdjust="spacingAndGlyphs">52°0'0''W</text>
<text class="b" transform="translate(102 511) rotate(-90)" font-size="48" textLength="161" lengthAdjust="spacingAndGlyphs">2°0'0''N</text>
<text class="b" transform="translate(102 1084) rotate(-90)" font-size="48" textLength="161" lengthAdjust="spacingAndGlyphs">1°0'0''N</text>
<text class="b" transform="translate(102 1637) rotate(-90)" font-size="48" textLength="126" lengthAdjust="spacingAndGlyphs">0°0'0''</text>
<text class="b" transform="translate(102 2222) rotate(-90)" font-size="48" textLength="161" lengthAdjust="spacingAndGlyphs">1°0'0''S</text>

<!-- RIGHT PANEL -->
<g clip-path="url(#panc)">
<g transform="translate(1950 0) scale(.8603 .8929)">
<rect x="25" y="127" width="1403" height="1403" fill="#4a7cae"/>
<path d="M1428 127H900L1250 420 1428 440Z" fill="#6a94bb"/>
<ellipse cx="1350" cy="240" rx="130" ry="170" fill="url(#p13)"/>
<ellipse cx="1200" cy="160" rx="210" ry="50" fill="url(#p13)"/>
<g fill="none" stroke="#9db7cf" opacity=".14">
<path d="M1010 135 C1120 160 1200 300 1300 370 L1428 440" stroke-width="110"/>
<path d="M1010 135 C1120 160 1200 300 1300 370 L1428 440" stroke-width="85"/>
<path d="M1010 135 C1120 160 1200 300 1300 370 L1428 440" stroke-width="60"/>
<path d="M1010 135 C1120 160 1200 300 1300 370 L1428 440" stroke-width="35"/>
</g>
<g fill="none" stroke="#7eaad0" opacity=".12">
<path d="M100 130 C50 250 30 500 40 660 C140 800 300 900 400 1040" stroke-width="120"/>
<path d="M100 130 C50 250 30 500 40 660 C140 800 300 900 400 1040" stroke-width="90"/>
<path d="M100 130 C50 250 30 500 40 660 C140 800 300 900 400 1040" stroke-width="60"/>
<path d="M100 130 C50 250 30 500 40 660 C140 800 300 900 400 1040" stroke-width="30"/>
<path d="M430 1010 C440 1100 420 1250 385 1400" stroke-width="90"/>
<path d="M430 1010 C440 1100 420 1250 385 1400" stroke-width="60"/>
<path d="M430 1010 C440 1100 420 1250 385 1400" stroke-width="30"/>
</g>
<g clip-path="url(#land)">
<rect x="0" y="120" width="1440" height="1420" fill="#42602a"/>
<ellipse cx="750" cy="240" rx="560" ry="160" fill="url(#p1)"/>
<ellipse cx="1000" cy="210" rx="230" ry="130" fill="url(#p1)"/>
<ellipse cx="330" cy="200" rx="180" ry="100" fill="url(#p2)"/>
<ellipse cx="1330" cy="560" rx="150" ry="190" fill="url(#p3)"/>
<ellipse cx="1320" cy="780" rx="110" ry="180" fill="url(#p4)" opacity=".7"/>
<ellipse cx="1080" cy="1280" rx="480" ry="330" fill="url(#p5)"/>
<ellipse cx="760" cy="1180" rx="130" ry="240" fill="url(#p6)"/>
<ellipse cx="1280" cy="1050" rx="210" ry="170" fill="url(#p5)"/>
<ellipse cx="800" cy="1480" rx="400" ry="100" fill="url(#p4)" opacity=".5"/>
<ellipse cx="530" cy="1260" rx="125" ry="340" fill="url(#p7)"/>
<ellipse cx="470" cy="1010" rx="120" ry="90" fill="url(#p8)"/>
<ellipse cx="320" cy="870" rx="120" ry="48" fill="url(#p8)" transform="rotate(28 320 870)"/>
<ellipse cx="150" cy="650" rx="80" ry="150" fill="url(#p4)" transform="rotate(-22 150 650)"/>
<ellipse cx="78" cy="530" rx="36" ry="64" fill="url(#p9)"/>
<ellipse cx="120" cy="340" rx="30" ry="90" fill="url(#p14)" transform="rotate(30 120 340)"/>
<ellipse cx="205" cy="210" rx="40" ry="110" fill="url(#p14)" transform="rotate(20 205 210)"/>
<ellipse cx="100" cy="400" rx="14" ry="60" fill="url(#p10)" opacity=".8"/>
<ellipse cx="60" cy="560" rx="20" ry="20" fill="url(#p10)" opacity=".8"/>
<ellipse cx="465" cy="1450" rx="26" ry="110" fill="url(#p16)" opacity=".85"/>
<ellipse cx="530" cy="1120" rx="80" ry="90" fill="url(#p15)" opacity=".8"/>
<ellipse cx="510" cy="1320" rx="40" ry="50" fill="url(#p16)" opacity=".5"/>
<ellipse cx="820" cy="1340" rx="90" ry="70" fill="url(#p4)" opacity=".6"/>
<path d="M640 200 700 212 790 178 825 165 850 240 835 285 860 305 960 265 1005 265 1070 270 1095 330 1165 325 1180 380 1140 410 1155 530 1140 590 1170 620 1150 680 1110 730 1130 770 1110 845 1040 878 990 855 870 860 850 910 800 935 835 970 740 1030 670 1070 640 1020 580 1020 560 970 490 880 440 845 415 880 390 890 290 855 240 780 170 650 105 560 105 460 135 375 205 290 270 250 295 280 400 295 460 265 540 245 610 255 625 295 695 270 660 260Z" fill="#2c5217"/>
<ellipse cx="740" cy="730" rx="70" ry="110" fill="url(#p12)"/>
<ellipse cx="560" cy="700" rx="110" ry="50" fill="url(#p12)" opacity=".6"/>
<ellipse cx="980" cy="730" rx="140" ry="90" fill="url(#p12)" opacity=".7"/>
<ellipse cx="700" cy="900" rx="180" ry="110" fill="url(#p12)" opacity=".7"/>
<ellipse cx="800" cy="220" rx="50" ry="40" fill="url(#p4)"/>
<ellipse cx="330" cy="760" rx="160" ry="70" fill="url(#p6)" transform="rotate(40 330 760)"/>
<ellipse cx="760" cy="460" rx="380" ry="170" fill="url(#p11)"/>
<rect x="0" y="120" width="1440" height="1420" fill="url(#mB)" opacity=".3"/>
</g>
<ellipse cx="472" cy="905" rx="16" ry="22" fill="#9bbbd0" transform="rotate(-35 472 905)"/>
<ellipse cx="560" cy="1015" rx="16" ry="9" fill="#8cab45"/>
<ellipse cx="722" cy="1430" rx="13" ry="8" fill="#5fa098"/>
<ellipse cx="720" cy="1395" rx="16" ry="16" fill="#2c4420"/>
<ellipse cx="995" cy="184" rx="5" ry="6" fill="#bcd0dc"/>
<path d="M1005 268 1030 276 1070 270 1078 310 1098 340 1098 375 1115 395 1075 388 1048 345 1018 310Z" fill="#2295ec" stroke="#cf1620" stroke-width="5"/>
<path d="M1030 300 1070 345M1050 290 1085 360" stroke="#f0d9a0" stroke-width="5" fill="none"/>
<path d="M640 200 700 212 790 178 825 165 850 240 835 285 860 305 960 265 1005 265M1095 330 1165 325 1180 380 1140 410 1155 530 1140 590 1170 620 1150 680 1110 730 1130 770 1110 845 1040 878 990 855 870 860 850 910 800 935 835 970 740 1030 670 1070 640 1020 580 1020 560 970 490 880 440 845 415 880 390 890 290 855 240 780 170 650 105 560 105 460 135 375 205 290 270 250 295 280 400 295 460 265 540 245 610 255 625 295 695 270 660 260 640 200" fill="none" stroke="#050505" stroke-width="8" stroke-linejoin="round"/>
<!-- north arrow -->
<path d="M1360 200 L1322 328 1360 280Z" fill="#050505" stroke="#050505" stroke-width="2"/>
<path d="M1360 200 L1400 328 1360 280Z" fill="none" stroke="#111" stroke-width="3"/>
<rect x="44" y="1440" width="244" height="37" fill="none" stroke="#111" stroke-width="3.5"/>
</g>
</g>
<text x="3077" y="167" font-size="46" textLength="36" lengthAdjust="spacingAndGlyphs" style="fill:#0c1b2c">N</text>
<text x="2060" y="1270" font-size="42" textLength="66" lengthAdjust="spacingAndGlyphs" style="fill:#1a2030">740</text>
<text x="2207" y="1316" font-size="37" textLength="52" lengthAdjust="spacingAndGlyphs" style="fill:#1a2030">km</text>

<!-- inset -->
<g clip-path="url(#insc)">
<g transform="translate(1950 0) scale(.8603 .8929)">
<rect x="972" y="917" width="440" height="600" fill="#5f8fbe"/>
<path d="M975 930 H1400 V1000 C1300 940 1150 920 975 960Z" fill="#7ea5cb" opacity=".6"/>
<ellipse cx="1300" cy="1420" rx="200" ry="160" fill="url(#p13)"/>
<path d="M1000 970 1050 950 1130 965 1190 1000 1240 1040 1270 1060 1340 1080 1385 1105 1375 1150 1345 1180 1340 1230 1280 1270 1240 1320 1195 1340 1180 1380 1130 1420 1100 1470 1115 1495 1080 1503 1050 1490 1035 1430 1050 1340 1075 1230 1040 1170 1000 1110 990 1060 1010 1030 985 990Z" fill="#637239"/>
<path d="M1010 975 1060 952 1130 965 1190 1000 1240 1040 1200 1050 1040 1040Z" fill="#3a6424"/>
<path d="M1050 1490 1035 1430 1050 1340 1075 1230 1090 1190 1130 1220 1120 1280 1090 1380 1085 1460 1115 1495Z" fill="#a99173"/>
<path d="M1044 1490 1036 1430 1050 1350 1062 1350 1055 1470Z" fill="#5a6a50"/>
<path d="M1035 1025 1120 1025 1130 1010 1165 1000 1175 1030 1215 1025 1245 1060 1250 1130 1230 1165 1175 1165 1165 1195 1135 1218 1085 1170 1040 1165 1000 1095 1005 1045Z" fill="#2c5217" stroke="#040404" stroke-width="6.5" stroke-linejoin="round"/>
<path d="M1210 1027 1226 1025 1240 1060 1228 1055Z" fill="#1f95ee"/>
</g>
</g>
<rect x="2786" y="819" width="379" height="535" fill="none" stroke="#060606" stroke-width="5"/>
<rect x="1971" y="113" width="1208" height="1253" fill="none" stroke="#0a0a0a" stroke-width="5"/>
<path d="M2278 94V113M2654 94V113M3028 94V113M3180 125H3199M3180 503H3199M3180 880H3199M3180 1257H3199" stroke="#111" stroke-width="5" fill="none"/>

<text class="b" x="2175" y="80" font-size="48" textLength="203" lengthAdjust="spacingAndGlyphs">72°0'0''W</text>
<text class="b" x="2552" y="80" font-size="48" textLength="204" lengthAdjust="spacingAndGlyphs">60°0'0''W</text>
<text class="b" x="2928" y="80" font-size="48" textLength="203" lengthAdjust="spacingAndGlyphs">48°0'0''W</text>
<text class="b" transform="translate(3245 205) rotate(-90)" font-size="46" textLength="156" lengthAdjust="spacingAndGlyphs">6°0'0''N</text>
<text class="b" transform="translate(3245 581) rotate(-90)" font-size="46" textLength="156" lengthAdjust="spacingAndGlyphs">6°0'0''S</text>
<text class="b" transform="translate(3245 970) rotate(-90)" font-size="46" textLength="183" lengthAdjust="spacingAndGlyphs">18°0'0''S</text>
<text class="b" transform="translate(3245 1348) rotate(-90)" font-size="46" textLength="183" lengthAdjust="spacingAndGlyphs">30°0'0''S</text>

<!-- LEGEND -->
<rect x="1969" y="1388" width="1214" height="925" fill="#fff" stroke="#777" stroke-width="2.5"/>
<text class="b" x="1983" y="1446" font-size="52" textLength="329" lengthAdjust="spacingAndGlyphs">Elevation (m)</text>
<rect x="1987" y="1474" width="127" height="66" fill="#6c9a5e" stroke="#4e86a8" stroke-width="5"/>
<g stroke="#777" stroke-width="3.5">
<rect x="1987" y="1558" width="125" height="63" fill="#adc07c"/>
<rect x="1987" y="1643" width="125" height="63" fill="#e6e79e"/>
<rect x="1987" y="1727" width="125" height="63" fill="#f1e296"/>
<rect x="1987" y="1812" width="125" height="63" fill="#f2d38a"/>
<rect x="1987" y="1896" width="125" height="63" fill="#e9b97f"/>
<rect x="1987" y="1980" width="125" height="63" fill="#d3a083"/>
<rect x="1987" y="2065" width="125" height="63" fill="#c79186"/>
<rect x="1987" y="2149" width="125" height="63" fill="#e3bac8"/>
<rect x="1987" y="2234" width="125" height="63" fill="#fdf0fa"/>
</g>
<g font-size="45">
<text x="2135" y="1521" textLength="120" lengthAdjust="spacingAndGlyphs">0 – 86</text>
<text x="2135" y="1605" textLength="232" lengthAdjust="spacingAndGlyphs">86.01 – 153</text>
<text x="2135" y="1691" textLength="256" lengthAdjust="spacingAndGlyphs">153.01 – 204</text>
<text x="2135" y="1775" textLength="256" lengthAdjust="spacingAndGlyphs">204.01 – 253</text>
<text x="2135" y="1860" textLength="256" lengthAdjust="spacingAndGlyphs">253.01 – 292</text>
<text x="2135" y="1943" textLength="256" lengthAdjust="spacingAndGlyphs">292.01 – 333</text>
<text x="2135" y="2027" textLength="256" lengthAdjust="spacingAndGlyphs">333.01 – 383</text>
<text x="2135" y="2112" textLength="256" lengthAdjust="spacingAndGlyphs">383.01 – 442</text>
<text x="2135" y="2195" textLength="256" lengthAdjust="spacingAndGlyphs">442.01 – 516</text>
<text x="2135" y="2280" textLength="256" lengthAdjust="spacingAndGlyphs">516.01 – 750</text>
</g>
<rect x="2483" y="1421" width="128" height="64" fill="none" stroke="#050505" stroke-width="6.5"/>
<rect x="2482" y="1505" width="131" height="68" fill="none" stroke="#dc3a40" stroke-width="3"/>
<path d="M2482 1625H2625" stroke="#0b2a82" stroke-width="6.5"/>
<path d="M2482 1719H2626" stroke="#1a9cf0" stroke-width="5"/>
<path d="M2557.5 1802 L2578 1838 2537 1838Z" fill="#000"/>
<circle cx="2558" cy="1931" r="21" fill="#f3838a" stroke="#6a4a40" stroke-width="1.5"/><circle cx="2558" cy="1931" r="4.5" fill="#000"/>
<path d="M2558 2038 L2579 2055 2572 2080 2544 2080 2537 2055Z" fill="#e39a10" stroke="#6a4a20" stroke-width="1.5"/><circle cx="2558" cy="2061" r="4.5" fill="#000"/>
<g font-size="56">
<text x="2636" y="1472" textLength="347" lengthAdjust="spacingAndGlyphs">Amazon Basin</text>
<text x="2636" y="1558" textLength="377" lengthAdjust="spacingAndGlyphs">Jari River Basin</text>
<text x="2642" y="1642" textLength="333" lengthAdjust="spacingAndGlyphs">Amazon River</text>
<text x="2654" y="1726" textLength="496" lengthAdjust="spacingAndGlyphs">Rio Jari hydrography</text>
<text x="2655" y="1819" textLength="495" lengthAdjust="spacingAndGlyphs">Gridded Climatology</text>
<text x="2813" y="1884" textLength="195" lengthAdjust="spacingAndGlyphs">Stations</text>
<text x="2653" y="1950" textLength="387" lengthAdjust="spacingAndGlyphs">Gauging Station</text>
<text x="2653" y="2035" textLength="514" lengthAdjust="spacingAndGlyphs">Santo Antônio do Jari</text>
<text x="2653" y="2098" textLength="440" lengthAdjust="spacingAndGlyphs">hydroelectric plant</text>
</g>
</svg>
</body></html>
